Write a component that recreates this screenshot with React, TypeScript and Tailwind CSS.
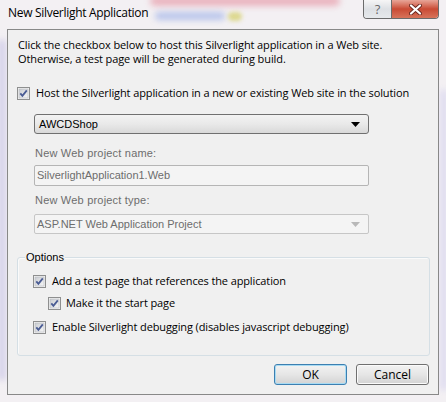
import React from 'react';

const seg = { fontFamily: '"Open Sans", "Liberation Sans", sans-serif' };
const tah = { fontFamily: '"Liberation Sans", Arial, sans-serif' };

function Check({ className = '' }: { className?: string }) {
  return (
    <svg width="13" height="13" viewBox="0 0 13 13" className={`shrink-0 ${className}`}>
      <defs>
        <linearGradient id="cbg" x1="0" y1="0" x2="1" y2="1">
          <stop offset="0" stopColor="#c9ccd1" />
          <stop offset="1" stopColor="#f7f7f7" />
        </linearGradient>
      </defs>
      <rect x="0.5" y="0.5" width="12" height="12" fill="#f4f4f4" stroke="#8e8f8f" />
      <rect x="2" y="2" width="9" height="9" fill="url(#cbg)" stroke="#b6b9be" strokeWidth="0.6" />
      <path d="M3.3 6.4 L5.4 8.9 L9.8 3.4" fill="none" stroke="#4a5c94" strokeWidth="1.8" />
    </svg>
  );
}

function Arrow({ color }: { color: string }) {
  return (
    <svg width="9" height="5" viewBox="0 0 9 5">
      <path d="M0 0 H9 L4.5 5 Z" fill={color} />
    </svg>
  );
}

export default function App() {
  return (
    <div className="relative w-[446px] h-[402px] overflow-hidden bg-[#f3f0f3]">
      {/* blurred glass behind the frame */}
      <div className="absolute left-[150px] top-[-4px] w-[190px] h-[10px] rounded-full bg-[#e79aa8] blur-[3px] opacity-70" />
      <div className="absolute left-[155px] top-[12px] w-[70px] h-[8px] rounded-full bg-[#9fb2e8] blur-[3px] opacity-70" />
      <div className="absolute left-[228px] top-[12px] w-[14px] h-[9px] rounded-full bg-[#d7d276] blur-[2px] opacity-80" />
      <div className="absolute left-[-2px] top-[40px] w-[8px] h-[340px] bg-[#c8c4e6] blur-[3px] opacity-70" />
      <div className="absolute left-[440px] top-[90px] w-[8px] h-[300px] bg-[#d2cfee] blur-[3px] opacity-60" />

      <div className="relative flex flex-col h-full">
        {/* title bar */}
        <div className="flex h-[29px]">
          <div className="pl-[8px] pt-[5px] text-[12px] tracking-[-0.3px] text-black leading-[16px] whitespace-nowrap" style={seg}>
            New Silverlight Application
          </div>
          <div className="ml-auto mr-[7px] flex h-[19px] rounded-b-[4px] border border-t-0 border-[#6b6b6b] overflow-hidden">
            <div className="w-[28px] flex items-center justify-center bg-gradient-to-b from-[#f6f6f6] via-[#dde0e4] to-[#e6e9ec] border-r border-[#6b6b6b] text-[13px] text-[#6a6a6a] leading-none" style={seg}>
              ?
            </div>
            <div className="w-[46px] flex items-center justify-center bg-gradient-to-b from-[#e7a598] via-[#c94a34] to-[#d7735a]">
              <svg width="13" height="11" viewBox="0 0 13 11">
                <path d="M2 1.5 L11 9.5 M11 1.5 L2 9.5" stroke="#6b2a22" strokeWidth="4" strokeLinecap="round" />
                <path d="M2 1.5 L11 9.5 M11 1.5 L2 9.5" stroke="#ffffff" strokeWidth="2.2" strokeLinecap="round" />
              </svg>
            </div>
          </div>
        </div>

        {/* client area */}
        <div className="mx-[7px] h-[366px] border border-[#888888] bg-[#f0f0f0] pl-[10px] pr-[8px]">
          <div className="mt-[8px] text-[11px] tracking-[-0.1px] leading-[14px] text-black whitespace-nowrap" style={seg}>
            <div>Click the checkbox below to host this Silverlight application in a Web site.</div>
            <div>Otherwise, a test page will be generated during build.</div>
          </div>

          <div className="mt-[20px] flex items-center gap-[6px] text-[11px] tracking-[-0.1px] leading-[14px] whitespace-nowrap" style={seg}>
            <Check className="-ml-[1px]" />
            <span>Host the Silverlight application in a new or existing Web site in the solution</span>
          </div>

          <div className="ml-[16px] w-[335px]">
            <div className="mt-[14px] h-[20px] flex items-center pl-[4px] pr-[8px] rounded-[3px] border border-[#707070] bg-gradient-to-b from-[#f3f3f3] via-[#e9e9e9] to-[#d9d9d9] text-[11px]" style={tah}>
              <span>AWCDShop</span>
              <span className="ml-auto">
                <Arrow color="#000" />
              </span>
            </div>

            <div className="mt-[12px] pl-[1px] text-[11px] tracking-[0.2px] leading-[14px] text-[#6d6d6d]" style={tah}>
              New Web project name:
            </div>
            <div className="mt-[5px] h-[21px] flex items-center pl-[2px] rounded-[2px] border border-[#b5b5b5] bg-[#f4f4f4] text-[11px] text-[#6d6d6d]" style={tah}>
              SilverlightApplication1.Web
            </div>

            <div className="mt-[7px] pl-[1px] text-[11px] tracking-[0.2px] leading-[14px] text-[#6d6d6d]" style={tah}>
              New Web project type:
            </div>
            <div className="mt-[7px] h-[20px] flex items-center pl-[2px] pr-[8px] rounded-[2px] border border-[#c6c6c6] bg-[#f4f4f4] text-[11px] text-[#6d6d6d]" style={tah}>
              <span>ASP.NET Web Application Project</span>
              <span className="ml-auto">
                <Arrow color="#b8b8b8" />
              </span>
            </div>
          </div>

          {/* options group */}
          <div className="relative mt-[23px] -ml-[1px] h-[99px] rounded-[3px] border border-[#d5dfe5] shadow-[inset_1px_1px_0_#fafafa]">
            <div className="absolute left-[7px] top-[-8px] px-[1px] bg-[#f0f0f0] text-[11px] leading-[14px]" style={tah}>
              Options
            </div>
            <div className="pl-[15px] text-[11px] tracking-[-0.12px] leading-[14px] whitespace-nowrap" style={seg}>
              <div className="mt-[16px] flex items-center gap-[6px]">
                <Check />
                <span>Add a test page that references the application</span>
              </div>
              <div className="mt-[8px] ml-[15px] flex items-center gap-[5px]">
                <Check />
                <span>Make it the start page</span>
              </div>
              <div className="mt-[10px] flex items-center gap-[6px]">
                <Check />
                <span>Enable Silverlight debugging (disables javascript debugging)</span>
              </div>
            </div>
          </div>

          {/* buttons */}
          <div className="mt-[8px] flex justify-end gap-[9px] pr-[1px] text-[12px]" style={seg}>
            <button className="w-[73px] h-[21px] rounded-[3px] border border-[#3c7fb1] bg-gradient-to-b from-[#f2f2f2] via-[#e6e6e6] to-[#d3d3d3] shadow-[inset_0_0_0_1px_#a8dbf3] leading-none">
              OK
            </button>
            <button className="w-[73px] h-[21px] rounded-[3px] border border-[#707070] bg-gradient-to-b from-[#f2f2f2] via-[#e6e6e6] to-[#d3d3d3] shadow-[inset_0_0_0_1px_#fbfbfb] leading-none">
              Cancel
            </button>
          </div>
        </div>
      </div>
    </div>
  );
}
